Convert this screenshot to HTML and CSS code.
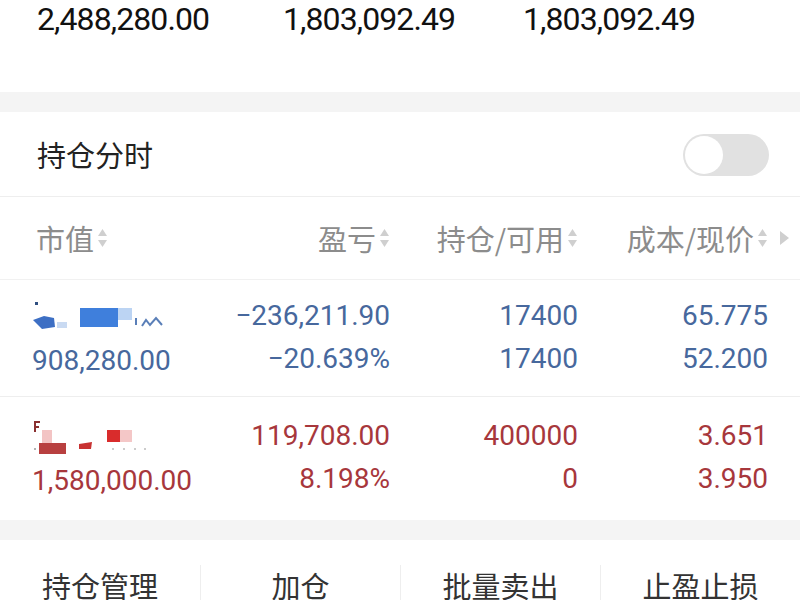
FILE: index.html
```html
<!DOCTYPE html>
<html lang="zh-CN">
<head>
<meta charset="utf-8">
<title>持仓</title>
<link rel="stylesheet" href="styles.css">
</head>
<body>
<div class="summary">
  <span>2,488,280.00</span>
  <span>1,803,092.49</span>
  <span>1,803,092.49</span>
</div>
<div class="band"></div>
<div class="title-row">
  <span class="title">持仓分时</span>
  <div class="toggle"><div class="knob"></div></div>
</div>
<div class="thead">
  <div class="th left">市值<svg class="sort" viewBox="0 0 11 22" width="11" height="22"><path d="M5.5 2 L10 9 H1 Z"/><path d="M5.5 20 L10 13 H1 Z"/></svg></div>
  <div class="th">盈亏<svg class="sort" viewBox="0 0 11 22" width="11" height="22"><path d="M5.5 2 L10 9 H1 Z"/><path d="M5.5 20 L10 13 H1 Z"/></svg></div>
  <div class="th">持仓/可用<svg class="sort" viewBox="0 0 11 22" width="11" height="22"><path d="M5.5 2 L10 9 H1 Z"/><path d="M5.5 20 L10 13 H1 Z"/></svg></div>
  <div class="th">成本/现价<svg class="sort" viewBox="0 0 11 22" width="11" height="22"><path d="M5.5 2 L10 9 H1 Z"/><path d="M5.5 20 L10 13 H1 Z"/></svg></div>
  <div class="th more"><svg viewBox="0 0 11 16" width="11" height="16"><path d="M1 1 L10 8 L1 15 Z"/></svg></div>
</div>
<div class="row blue">
  <div class="cell left">
    <div class="line name">
      <svg viewBox="0 0 140 40" width="140" height="40">
        <rect x="3" y="6" width="3" height="3" fill="#2f4f80"/>
        <path d="M1 24 L12 20 L22 22 L23 31 L10 33 Z" fill="#3d6fc4"/>
        <rect x="25" y="26" width="10" height="6" fill="#c9daf2"/>
        <rect x="48" y="12" width="38" height="19" fill="#3f7fdc"/>
        <rect x="86" y="12" width="14" height="12" fill="#bcd4f3"/>
        <rect x="103" y="22" width="2" height="7" fill="#5a7fb8"/>
        <path d="M110 30 L114 24 L118 29 L124 22 L130 29" stroke="#5a7fb8" stroke-width="2" fill="none"/>
      </svg>
    </div>
    <div class="line">908,280.00</div>
  </div>
  <div class="cell"><div class="line">−236,211.90</div><div class="line">−20.639%</div></div>
  <div class="cell"><div class="line">17400</div><div class="line">17400</div></div>
  <div class="cell"><div class="line">65.775</div><div class="line">52.200</div></div>
</div>
<div class="row red">
  <div class="cell left">
    <div class="line name">
      <svg viewBox="0 0 140 40" width="140" height="40">
        <path d="M2 6 H8 M3 6 V16 M3 11 H7" stroke="#8a3030" stroke-width="2" fill="none"/>
        <rect x="10" y="14" width="10" height="13" fill="#f3c4c4"/>
        <rect x="7" y="27" width="27" height="11" fill="#b84040"/>
        <path d="M47 28 L60 26 L59 33 L47 33 Z" fill="#c83232"/>
        <rect x="75" y="14" width="13" height="12" fill="#d92c2c"/>
        <rect x="88" y="14" width="12" height="12" fill="#f4c7c7"/>
        <circle cx="3" cy="33" r="1" fill="#999"/>
        <circle cx="81" cy="33" r="1" fill="#bbb"/>
        <circle cx="92" cy="33" r="1" fill="#bbb"/>
        <circle cx="103" cy="33" r="1" fill="#bbb"/>
        <circle cx="113" cy="33" r="1" fill="#bbb"/>
      </svg>
    </div>
    <div class="line">1,580,000.00</div>
  </div>
  <div class="cell"><div class="line">119,708.00</div><div class="line">8.198%</div></div>
  <div class="cell"><div class="line">400000</div><div class="line">0</div></div>
  <div class="cell"><div class="line">3.651</div><div class="line">3.950</div></div>
</div>
<div class="band"></div>
<div class="actions">
  <div class="action">持仓管理</div>
  <div class="action">加仓</div>
  <div class="action">批量卖出</div>
  <div class="action">止盈止损</div>
</div>
</body>
</html>
```
FILE: styles.css
```css
html, body {
  margin: 0;
  padding: 0;
  background: #ffffff;
  width: 800px;
  height: 600px;
  overflow: hidden;
  font-family: Roboto, "Noto Sans CJK SC", sans-serif;
}

.summary {
  height: 92px;
  display: grid;
  grid-template-columns: 246px 240px 1fr;
  padding-left: 37px;
  padding-top: 1px;
  box-sizing: border-box;
  font-size: 32px;
  line-height: 36px;
  letter-spacing: -0.9px;
  color: #111111;
}

.band {
  height: 20px;
  background: #f4f4f4;
}

.title-row {
  height: 84px;
  border-bottom: 1px solid #eeeeee;
  display: flex;
  align-items: center;
  justify-content: space-between;
  padding: 0 31px 0 37px;
}

.title {
  font-family: "Noto Sans CJK SC", sans-serif;
  font-size: 29px;
  color: #222222;
}

.toggle {
  width: 86px;
  height: 42px;
  border-radius: 21px;
  background: #e1e1e1;
  padding: 2px;
  box-sizing: border-box;
  margin-top: 2px;
}

.knob {
  width: 38px;
  height: 38px;
  border-radius: 50%;
  background: #ffffff;
}

.thead {
  height: 82px;
  border-bottom: 1px solid #f1f1f1;
  display: grid;
  grid-template-columns: 164px 190px 188px 190px 32px;
  padding-left: 36px;
  align-items: center;
  font-family: "Noto Sans CJK SC", sans-serif;
  font-size: 29px;
  color: #8c8c8c;
}

.th {
  display: flex;
  align-items: center;
  justify-content: flex-end;
  gap: 3px;
}

.th.left {
  justify-content: flex-start;
}

.th.more {
  justify-content: flex-start;
  padding-left: 11px;
}

.sort path,
.more path {
  fill: #cfcfcf;
}

.row {
  display: grid;
  grid-template-columns: 164px 190px 188px 190px 32px;
  padding: 14px 0 0 36px;
  height: 117px;
  box-sizing: border-box;
  border-bottom: 1px solid #eeeeee;
  font-size: 28px;
}

.row.red {
  height: 123px;
  padding-top: 17px;
  border-bottom: none;
}

.blue { color: #47689d; }
.red { color: #a7373c; }

.cell {
  text-align: right;
}

.cell.left {
  text-align: left;
  margin-left: -4px;
}

.line {
  height: 43px;
  line-height: 43px;
  white-space: nowrap;
}

.name svg {
  display: block;
  margin-top: 2px;
}

.actions {
  display: grid;
  grid-template-columns: repeat(4, 200px);
  padding-top: 25px;
}

.action {
  height: 50px;
  padding-top: 2px;
  line-height: 36px;
  text-align: center;
  font-family: "Noto Sans CJK SC", sans-serif;
  font-size: 29px;
  color: #333333;
}

.action + .action {
  border-left: 1px solid #eeeeee;
}
```
